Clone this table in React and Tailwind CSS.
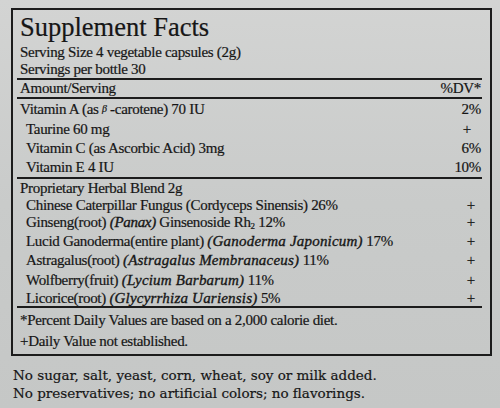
function Row({ h, indent, children, right, rightPr = 'pr-[1px]' }) {
  return (
    <div className={`flex items-center justify-between ${h}`}>
      <div className={`${indent ? 'pl-[9px]' : 'pl-[3px]'} whitespace-nowrap`}>{children}</div>
      {right && <div className={`${rightPr} whitespace-nowrap`}>{right}</div>}
    </div>
  )
}

function Herb({ h, name, latin, pct }) {
  return (
    <Row h={h} indent right="+" rightPr="pr-[7px]">
      {name}
      <i className="tracking-[0.2px] [-webkit-text-stroke:0.35px_#161616]">({latin})</i> {pct}
    </Row>
  )
}

export default function App() {
  return (
    <div className="w-[500px] h-[408px] overflow-hidden bg-gradient-to-b from-[#d3d4d3] via-[#c9cbca] to-[#c5c7c6] text-[#161616] pt-[8px] font-['Liberation_Serif','Times_New_Roman',serif] [-webkit-text-stroke:0.2px_#161616]">
      <div className="ml-[11px] w-[481px] border-2 border-[#1c1c1c] pl-[4px] pr-[8px] pb-[4px] text-[15px] leading-none tracking-[-0.3px]">
        <div className="border-b-2 border-[#1c1c1c]">
          <div className="h-[34px] pt-[1px] pl-[3px] text-[26.5px] leading-[32px] tracking-normal">Supplement Facts</div>
          <Row h="h-[16px]">Serving Size 4 vegetable capsules (2g)</Row>
          <Row h="h-[18px]">Servings per bottle 30</Row>
        </div>
        <div className="border-b-2 border-[#1c1c1c]">
          <Row h="h-[17px]" right="%DV*">Amount/Serving</Row>
        </div>
        <div className="border-b-2 border-[#1c1c1c]">
          <Row h="h-[20px]" right="2%">
            Vitamin A (as <i className="text-[10px] relative -top-[2px]">β</i> -carotene) 70 IU
          </Row>
          <Row h="h-[20px]" indent right="+" rightPr="pr-[11px]">Taurine 60 mg</Row>
          <Row h="h-[19px]" indent right="6%">Vitamin C (as Ascorbic Acid) 3mg</Row>
          <Row h="h-[19px]" indent right="10%">Vitamin E 4 IU</Row>
        </div>
        <div className="border-b-2 border-[#1c1c1c]">
          <Row h="h-[18px]">Proprietary Herbal Blend 2g</Row>
          <Row h="h-[16px]" indent right="+" rightPr="pr-[7px]">
            Chinese Caterpillar Fungus (Cordyceps Sinensis) 26%
          </Row>
          <Row h="h-[19px]" indent right="+" rightPr="pr-[7px]">
            Ginseng(root) <i className="[-webkit-text-stroke:0.35px_#161616]">(Panax)</i> Ginsenoside Rh<span className="text-[9px] relative top-[2px]">2</span> 12%
          </Row>
          <Herb h="h-[19px]" name="Lucid Ganoderma(entire plant) " latin="Ganoderma Japonicum" pct="17%" />
          <Herb h="h-[19px]" name="Astragalus(root) " latin="Astragalus  Membranaceus" pct="11%" />
          <Herb h="h-[20px]" name="Wolfberry(fruit) " latin="Lycium  Barbarum" pct="11%" />
          <Herb h="h-[16px]" name="Licorice(root) " latin="Glycyrrhiza Uariensis" pct="5%" />
        </div>
        <Row h="h-[24px]">*Percent Daily Values are based on a 2,000 calorie diet.</Row>
        <Row h="h-[18px]">+Daily Value not established.</Row>
      </div>
      <div className="mt-[10px] ml-[13px] text-[13.5px] leading-[18px] font-['DejaVu_Serif',serif]">
        <div>No sugar, salt, yeast, corn, wheat, soy or milk added.</div>
        <div>No preservatives; no artificial colors; no flavorings.</div>
      </div>
    </div>
  )
}
